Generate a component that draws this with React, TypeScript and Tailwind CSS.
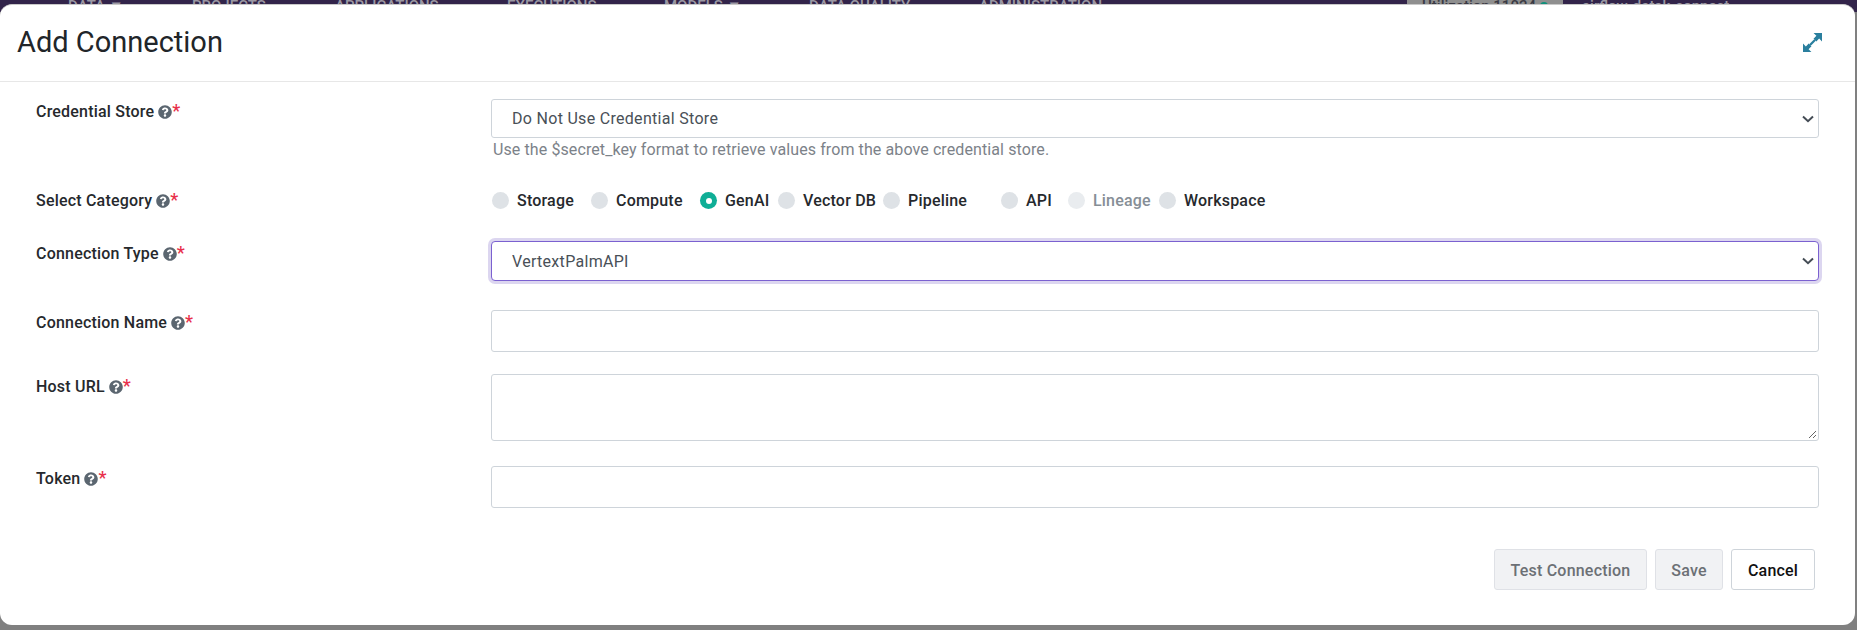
import { FaQuestionCircle } from "react-icons/fa";

const navItems = [
  { label: "DATA ▼", className: "w-[124px]" },
  { label: "PROJECTS", className: "w-[143px]" },
  { label: "APPLICATIONS", className: "w-[172px]" },
  { label: "EXECUTIONS", className: "w-[157px]" },
  { label: "MODELS ▼", className: "w-[145px]" },
  { label: "DATA QUALITY", className: "w-[170px]" },
  { label: "ADMINISTRATION", className: "w-[428px]" },
];

const categories = [
  { label: "Storage", className: "w-[99px]" },
  { label: "Compute", className: "w-[109px]" },
  { label: "GenAI", className: "w-[78px]", checked: true },
  { label: "Vector DB", className: "w-[105px]" },
  { label: "Pipeline", className: "w-[118px]" },
  { label: "API", className: "w-[67px]" },
  { label: "Lineage", className: "w-[91px]", disabled: true },
  { label: "Workspace", className: "w-[120px]" },
];

const controlBase =
  "block rounded-[3px] border border-[#ced4da] bg-white text-[16px] tracking-[0.3px] text-[#495057] outline-none";

function FieldLabel({ text }: { text: string }) {
  return (
    <div className="flex h-6 w-[491px] shrink-0 items-center pl-[36px] pt-[1px] text-[16px] font-medium tracking-[0.2px] text-[#26292d]">
      <span>{text}</span>
      <FaQuestionCircle className="ml-[4px] text-[14px] text-[#5b6670]" />
      <span className="relative -top-[1px] text-[18px] leading-none text-[#e8304a]">*</span>
    </div>
  );
}

function Radio({ checked, disabled }: { checked?: boolean; disabled?: boolean }) {
  if (checked) {
    return (
      <span className="grid h-[17px] w-[17px] place-items-center rounded-full bg-[#0fae96]">
        <span className="h-[6px] w-[6px] rounded-full bg-white" />
      </span>
    );
  }
  return (
    <span
      className={
        disabled
          ? "h-[17px] w-[17px] rounded-full bg-[#e9ecef]"
          : "h-[17px] w-[17px] rounded-full bg-[#dee2e6]"
      }
    />
  );
}

function ExpandIcon() {
  return (
    <svg width="19" height="19" viewBox="0 0 18 18" fill="#2a7f9e">
      <path d="M10 0H18V8L15.3 5.3L12.6 8L10 5.4L12.7 2.7Z" />
      <path d="M8 18H0V10L2.7 12.7L5.4 10L8 12.6L5.3 15.3Z" />
      <path d="M10.6 5.9L12.1 7.4L7.4 12.1L5.9 10.6Z" />
    </svg>
  );
}

// chevron sits over the select, same as the browser's own arrow
function Chevron() {
  return (
    <svg
      className="pointer-events-none absolute right-[5px] top-1/2 -translate-y-1/2"
      width="12"
      height="8"
      viewBox="0 0 12 8"
      fill="none"
      stroke="#444c55"
      strokeWidth="2"
    >
      <path d="M1 1.5L6 6.2L11 1.5" />
    </svg>
  );
}

function ResizeGrip() {
  return (
    <svg
      className="pointer-events-none absolute bottom-[2px] right-[2px] bg-white"
      width="9"
      height="9"
      viewBox="0 0 9 9"
      fill="none"
      stroke="#666666"
      strokeWidth="1"
    >
      <path d="M1 8L8 1M5 8L8 5" />
    </svg>
  );
}

export default function App() {
  return (
    <div
      className="relative h-[630px] w-[1857px] overflow-hidden bg-[#808080]"
      style={{ fontFamily: "Roboto, sans-serif" }}
    >
      <div className="flex h-[12px] items-start overflow-hidden bg-[#32244a] pl-[68px] text-[15px] font-medium leading-[16px] text-[#9b98a3]">
        {navItems.map((item) => (
          <span key={item.label} className={`-mt-[2px] shrink-0 ${item.className}`}>
            {item.label}
          </span>
        ))}
        <span className="-mt-[2px] flex h-[16px] w-[156px] shrink-0 items-center justify-center gap-1 bg-[#8f8f8f] text-[#3a3a44]">
          Utilization 11024
          <span className="h-[8px] w-[8px] rounded-full bg-[#0f8f7a]" />
        </span>
        <span className="-mt-[2px] ml-[19px] shrink-0">airflow-datak-connect</span>
      </div>

      {/* modal */}
      <div className="absolute left-0 top-[4px] h-[621px] w-[1855px] overflow-hidden rounded-[12px] border-t border-[#c9c9c9] bg-white">
        <div className="flex h-[77px] items-center justify-between border-b border-[#e7e7e7] pb-[2px] pl-[17px] pr-[33px]">
          <h1 className="text-[29px] font-normal leading-none text-[#212529]">Add Connection</h1>
          <ExpandIcon />
        </div>

        <div className="flex pt-[17px]">
          <FieldLabel text="Credential Store" />
          <div className="w-[1328px]">
            <div className="relative">
              <select
                className={`${controlBase} h-[39px] w-full appearance-none pl-[20px] pr-6 pt-[1px]`}
                defaultValue="none"
              >
                <option value="none">Do Not Use Credential Store</option>
              </select>
              <Chevron />
            </div>
            <div className="mt-[1px] pl-[2px] text-[16px] leading-[22px] tracking-[0.1px] text-[#7c8289]">
              Use the $secret_key format to retrieve values from the above credential store.
            </div>
          </div>
        </div>

        <div className="mt-[27px] flex">
          <FieldLabel text="Select Category" />
          <div className="flex h-6 items-center pl-[1px] pt-[1px]">
            {categories.map((c) => (
              <label key={c.label} className={`flex shrink-0 items-center gap-2 ${c.className}`}>
                <Radio checked={c.checked} disabled={c.disabled} />
                <span
                  className={
                    c.disabled
                      ? "text-[16px] font-medium tracking-[0.2px] text-[#868e96]"
                      : "text-[16px] font-medium tracking-[0.2px] text-[#26292d]"
                  }
                >
                  {c.label}
                </span>
              </label>
            ))}
          </div>
        </div>

        <div className="mt-[29px] flex">
          <FieldLabel text="Connection Type" />
          <div className="relative w-[1328px]">
            <select
              className="block h-[40px] w-full appearance-none rounded-[4px] border border-[#7b61d0] bg-white pl-[20px] pr-6 pt-[1px] text-[16px] tracking-[0.3px] text-[#495057] shadow-[0_0_0_3px_#dcd6f0] outline-none"
              defaultValue="vertex"
            >
              <option value="vertex">VertextPalmAPI</option>
            </select>
            <Chevron />
          </div>
        </div>

        <div className="mt-[29px] flex">
          <FieldLabel text="Connection Name" />
          <input className={`${controlBase} h-[42px] w-[1328px] px-3`} />
        </div>

        <div className="mt-[22px] flex">
          <FieldLabel text="Host URL" />
          <div className="relative h-[67px] w-[1328px]">
            <textarea className={`${controlBase} h-full w-full resize-none px-3`} />
            <ResizeGrip />
          </div>
        </div>

        <div className="mt-[25px] flex">
          <FieldLabel text="Token" />
          <input className={`${controlBase} h-[42px] w-[1328px] px-3`} />
        </div>

        <div className="mt-[41px] flex justify-end gap-2 pr-[40px]">
          <button
            type="button"
            className="h-[41px] w-[153px] rounded-[3px] border border-[#dfe1e6] bg-[#f1f2f4] pt-[2px] text-[16px] font-medium tracking-[0.2px] text-[#6c7075]"
          >
            Test Connection
          </button>
          <button
            type="button"
            className="h-[41px] w-[68px] rounded-[3px] border border-[#dfe1e6] bg-[#f1f2f4] pt-[2px] text-[16px] font-medium tracking-[0.2px] text-[#6c7075]"
          >
            Save
          </button>
          <button
            type="button"
            className="h-[41px] w-[84px] rounded-[3px] border border-[#ced4da] bg-white pt-[2px] text-[16px] font-medium tracking-[0.2px] text-[#111111]"
          >
            Cancel
          </button>
        </div>
      </div>
    </div>
  );
}
